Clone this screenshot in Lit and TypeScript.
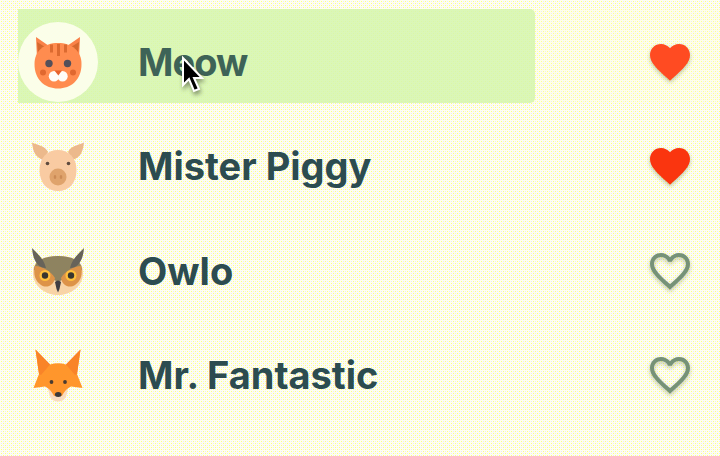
import { LitElement, html, css, svg } from "lit";
import { customElement, property } from "lit/decorators.js";

const faces: Record<string, unknown> = {
  cat: svg`
    <path d="M6 3 L19 12 L7 24Z M50 3 L37 12 L49 24Z" fill="#f98148"/>
    <path d="M7 8 L15 13 L8 19Z M49 8 L41 13 L48 19Z" fill="#d5682e"/>
    <path d="M4.500 30 C4.500 17 14 9 28 9 C42 9 51.500 17 51.500 30 C51.500 46 41 54.500 28 54.500 C15 54.500 4.500 46 4.500 30Z" fill="#ff8c4f"/>
    <path d="M20 10.500 h3 v8 h-3z M27 10 h3 v12 h-3z M34 10.500 h3 v8 h-3z" fill="#dc6a30"/>
    <circle cx="13" cy="38.500" r="3" fill="#e0682f"/><circle cx="43" cy="38.500" r="3" fill="#e0682f"/>
    <circle cx="19" cy="29.500" r="3.700" fill="#54505a"/><circle cx="37.500" cy="29.500" r="3.700" fill="#54505a"/>
    <circle cx="24" cy="42.300" r="5.200" fill="#fffdf8"/><circle cx="32.500" cy="42.300" r="5.200" fill="#fffdf8"/>
    <path d="M24.500 36.500 h7.500 l-3.700 5z" fill="#e7622d"/>`,
  pig: svg`
    <path d="M2 4.500 C10 8 15 8 18 14 L14 22 C5 20 3 13 2 4.500Z M54 4.500 C46 8 41 8 38 14 L42 22 C51 20 53 13 54 4.500Z" fill="#ecb98c"/>
    <path d="M9.500 32 C9.500 20 17 12 28 12 C39 12 46.500 20 46.500 32 C46.500 45 39 53 28 53 C17 53 9.500 45 9.500 32Z" fill="#f9cba2"/>
    <circle cx="28" cy="39" r="8.500" fill="#dfa36c"/>
    <circle cx="17.500" cy="25.500" r="1.800" fill="#5e4b3f"/><circle cx="38.500" cy="25.500" r="1.800" fill="#5e4b3f"/>
    <ellipse cx="25" cy="39" rx="1.300" ry="2" fill="#cb8b55"/><ellipse cx="31" cy="39" rx="1.300" ry="2" fill="#cb8b55"/>`,
  owl: svg`
    <path d="M3 30 C3 18 12 13 28 13 C44 13 53 18 53 30 C53 44 40 52 28 52 C16 52 3 44 3 30Z" fill="#f8d4a6"/>
    <path d="M4 27 C4 18 14 13 28 13 C42 13 52 18 52 27 L28 39Z" fill="#8e8360"/>
    <path d="M5 23 C12 23 21 28 25 35 C24 42 17 46 11 42 C5 38 3 31 5 23Z M51 23 C44 23 35 28 31 35 C32 42 39 46 45 42 C51 38 53 31 51 23Z" fill="#dd9348"/>
    <path d="M2 5 C10 13 14 17 16 25 C9 25 3 19 2 5Z M54 5 C46 13 42 17 40 25 C47 25 53 19 54 5Z" fill="#67635a"/>
    <circle cx="15" cy="32.500" r="5.500" fill="#ffc03c"/><circle cx="41" cy="32.500" r="5.500" fill="#ffc03c"/>
    <circle cx="15" cy="32.500" r="3.200" fill="#38362f"/><circle cx="41" cy="32.500" r="3.200" fill="#38362f"/>
    <path d="M25 39 Q28 36 31 39 L29.500 46 L28 49.500 L26.500 46Z" fill="#3f3d42"/>`,
  fox: svg`
    <path d="M17 38 H39 L36 50 Q33 54.500 28 54.500 Q23 54.500 20 50Z" fill="#f8dcc0"/>
    <path d="M5.500 2.500 L20 17.500 Q28 15 36 17.500 L50.500 2.500 L47 27 L52.500 41 L41 39.500 C36 42 34 45 32 49 H24 C22 45 20 42 15 39.500 L3.500 41 L9 27Z" fill="#ff962c"/>
    <path d="M5.500 2.500 L20 17.500 L11 28 L9 27Z M50.500 2.500 L36 17.500 L45 28 L47 27Z" fill="#f98428"/>
    <circle cx="21.500" cy="35" r="1.900" fill="#493b31"/><circle cx="35" cy="35" r="1.900" fill="#493b31"/>
    <ellipse cx="28.200" cy="47.500" rx="3.300" ry="2.500" fill="#3b3938"/>`,
};

@customElement("favorite-heart")
class FavoriteHeart extends LitElement {
  @property({ type: Boolean }) filled = false;
  @property({ type: Boolean }) bright = false;
  static styles = css`
    :host { display: block; width: 48px; height: 48px; }
    svg { display: block; filter: drop-shadow(0 2px 2px rgba(100, 120, 50, 0.4)); }
    .filled { fill: #fa350f; }
    .bright { fill: #ff4b22; }
    .outline { fill: #769278; }
  `;
  render() {
    const outer = "M12 21.35l-1.450-1.320C5.400 15.360 2 12.280 2 8.500 2 5.420 4.420 3 7.500 3c1.740 0 3.410.810 4.500 2.090C13.090 3.810 14.760 3 16.500 3 19.580 3 22 5.420 22 8.500c0 3.780-3.400 6.860-8.550 11.540z";
    const inner = "M16.500 3c-1.740 0-3.410.810-4.500 2.090C10.910 3.810 9.240 3 7.500 3 4.420 3 2 5.420 2 8.500c0 3.780 3.400 6.860 8.550 11.540L12 21.350l1.450-1.320C18.600 15.360 22 12.280 22 8.500 22 5.420 19.580 3 16.500 3zm-4.400 15.550l-.1.100-.1-.1C7.140 14.240 4 11.390 4 8.500 4 6.500 5.500 5 7.500 5c1.540 0 3.040.990 3.570 2.360h1.870C13.460 5.990 14.960 5 16.500 5c2 0 3.500 1.500 3.500 3.500 0 2.890-3.140 5.740-7.900 10.050z";
    return html`<svg width="48" height="48" viewBox="0 0 24 24"><path class=${this.filled ? (this.bright ? "bright" : "filled") : "outline"} d=${this.filled ? outer : inner}></path></svg>`;
  }
}

@customElement("app-root")
class AppRoot extends LitElement {
  private animals = [
    { name: "Meow", face: "cat", liked: true, active: true },
    { name: "Mister Piggy", face: "pig", liked: true },
    { name: "Owlo", face: "owl", liked: false },
    { name: "Mr. Fantastic", face: "fox", liked: false },
  ];
  static styles = css`
    :host {
      display: block; position: relative; box-sizing: border-box;
      width: 720px; height: 456px; padding: 9px 0 0 18px; overflow: hidden;
      background-color: #fffff0;
      background-image:
        conic-gradient(from 90deg at 3px 3px, #ffff80 25%, transparent 0),
        conic-gradient(from 90deg at 3px 3px, #ffff80 25%, transparent 0),
        conic-gradient(from 90deg at 3px 3px, #e8e8fa 25%, transparent 0),
        conic-gradient(from 90deg at 3px 3px, #e8e8fa 25%, transparent 0);
      background-size: 4px 4px;
      background-position: 0 0, 2px 2px, 2px 0, 0 2px;
      font-family: Inter, "Liberation Sans", sans-serif;
    }
    .list { display: flex; flex-direction: column; gap: 11px; }
    .row { display: flex; align-items: center; box-sizing: border-box; height: 93.500px; padding: 11.500px 26px 0 0; }
    .active { position: relative; background: #ffffc830; }
    .active::before { content: ""; position: absolute; left: 0; top: 0; width: 517px; height: 100%; border-radius: 0 5px 5px 0; background: #d2f5aacc; }
    .avatar { position: relative; display: grid; place-items: center; flex: none; width: 80px; height: 80px; border-radius: 50%; }
    .active .avatar { background: #fffff0e0; }
    .avatar svg { display: block; }
    .name { position: relative; flex: 1; margin-left: 40px; color: #2c4c50; font-size: 38px; font-weight: 750; line-height: 48px; white-space: nowrap; }
    .active .name { color: #3e6357; letter-spacing: -0.9px; }
    .cursor { position: absolute; left: 181px; top: 55px; filter: drop-shadow(1px 3px 2px #0006); }
  `;
  render() {
    return html`
      <div class="list">
        ${this.animals.map(a => html`
          <div class="row ${a.active ? "active" : ""}">
            <div class="avatar"><svg width="56" height="56" viewBox="0 0 56 56">${faces[a.face]}</svg></div>
            <div class="name">${a.name}</div>
            <favorite-heart ?filled=${a.liked} ?bright=${a.active}></favorite-heart>
          </div>`)}
      </div>
      <svg class="cursor" width="24" height="40" viewBox="0 0 24 40"><path d="M2 3 V30 L8 24 L13 36 L18 34 L13 23 H21Z" fill="#000" stroke="#fff" stroke-width="2"/></svg>
    `;
  }
}
